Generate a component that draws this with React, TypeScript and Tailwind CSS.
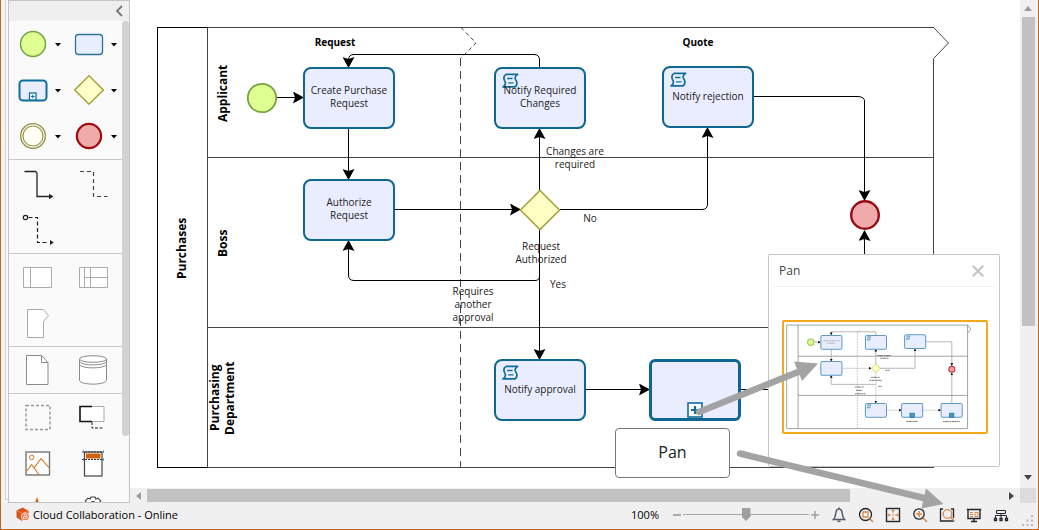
import React from "react";

type Kids = { children?: React.ReactNode };

function PaletteItem({ label, menu, children }: Kids & { label: string; menu?: boolean }) {
  return (
    <button type="button" aria-label={label} className="block h-[46px] w-14 shrink-0">
      <svg viewBox="0 0 56 46" className="block h-[46px] w-14" fill="none">
        {children}
        {menu && <path d="M46 22h6l-3 3.4z" fill="#000" />}
      </svg>
    </button>
  );
}

function PaletteSection({ children }: Kids) {
  return (
    <div className="grid grid-cols-[56px_56px] border-b border-[#c9c9c9] pb-px last:border-b-0">{children}</div>
  );
}

function Palette() {
  return (
    <aside className="flex w-[122px] shrink-0 flex-col overflow-hidden border border-[#c4c4c4] bg-[#fafafa]">
      <div className="flex h-5 shrink-0 items-center justify-end bg-[#efefef] pr-1.5">
        <button type="button" aria-label="Collapse palette">
          <svg viewBox="0 0 8 12" className="h-3 w-2" fill="none" stroke="#777" strokeWidth="1.8">
            <path d="M7 1L2 6l5 5" />
          </svg>
        </button>
      </div>
      <div className="flex min-h-0 flex-1">
        <div className="min-w-0 flex-1">
          <div className="grid grid-cols-[56px_56px] border-b border-[#c9c9c9]">
            <PaletteItem label="Start event" menu>
              <circle cx="24" cy="23" r="12.5" fill="#e0ff92" stroke="#72a541" strokeWidth="1.5" />
            </PaletteItem>
            <PaletteItem label="Task" menu>
              <rect x="10.5" y="13.5" width="27" height="20" rx="3" fill="#e9eeff" stroke="#2d7399" strokeWidth="1.3" />
            </PaletteItem>
            <PaletteItem label="Sub-process" menu>
              <rect x="10.5" y="13.5" width="27" height="20" rx="3.5" fill="#e9eeff" stroke="#0f6f9c" strokeWidth="2" />
              <rect x="20.5" y="26" width="6.5" height="7" fill="#fff" stroke="#0f6f9c" strokeWidth="1.3" />
              <path d="M22 29.5h3.6M23.8 27.7v3.6" stroke="#0f6f9c" strokeWidth="1.1" />
            </PaletteItem>
            <PaletteItem label="Gateway" menu>
              <path d="M24 8.8L38.3 23 24 37.2 9.7 23z" fill="#ffffc9" stroke="#a5a53f" strokeWidth="1.5" />
            </PaletteItem>
            <PaletteItem label="Intermediate event" menu>
              <circle cx="24" cy="23" r="12.3" fill="#fffff4" stroke="#8e8c42" strokeWidth="1.3" />
              <circle cx="24" cy="23" r="10" stroke="#9a984f" strokeWidth="1.2" />
            </PaletteItem>
            <PaletteItem label="End event" menu>
              <circle cx="24" cy="23" r="12.1" fill="#efaaaa" stroke="#9d0a12" strokeWidth="2.2" />
            </PaletteItem>
          </div>
          <PaletteSection>
            <PaletteItem label="Sequence flow">
              <path d="M15.5 11.5H26.500L28 13V36.500H41" stroke="#222" strokeWidth="1.3" />
              <path d="M40 33.8L44.500 36.500 40 39.200z" fill="#222" />
            </PaletteItem>
            <PaletteItem label="Association">
              <path d="M15 11.500H28.500V36.500H42.500" stroke="#444" strokeWidth="1.200" strokeDasharray="4 3" />
            </PaletteItem>
            <PaletteItem label="Message flow">
              <circle cx="16.500" cy="11.500" r="2.200" stroke="#222" strokeWidth="1.200" />
              <path d="M19.500 11.500H28.500V36.500H40" stroke="#222" strokeWidth="1.200" strokeDasharray="4 2.500" />
              <path d="M41 33.900L44.800 36.500 41 39.100z" fill="#222" />
            </PaletteItem>
          </PaletteSection>
          <div className="grid grid-cols-[56px_56px] border-b border-[#c9c9c9]">
            <PaletteItem label="Pool">
              <path d="M14.500 13.500h28v20h-28zM21.500 13.500v20" fill="#fff" stroke="#aaa" />
            </PaletteItem>
            <PaletteItem label="Lane">
              <path d="M14.500 13.500h28v20h-28zM19.500 13.500v20M25.500 13.500v20M19.500 23.500h23" fill="#fff" stroke="#aaa" />
            </PaletteItem>
            <PaletteItem label="Milestone">
              <path d="M18.500 9.500h16l5 6-5 6v16h-16z" fill="#fff" stroke="#aaa" />
            </PaletteItem>
          </div>
          <div className="grid grid-cols-[56px_56px] border-b border-[#c9c9c9]">
            <PaletteItem label="Data object">
              <path d="M17.500 8.500h15l6.500 7v22h-21.500z" fill="#fff" stroke="#8a8a8a" />
              <path d="M32.500 8.500v7H39" stroke="#8a8a8a" />
            </PaletteItem>
            <PaletteItem label="Data store">
              <path d="M14.500 12v21c0 5.500 27 5.500 27 0V12" fill="#fff" stroke="#8a8a8a" />
              <ellipse cx="28" cy="12" rx="13.500" ry="3.300" fill="#fff" stroke="#8a8a8a" />
              <path d="M14.500 14.500c2 4.500 25 4.500 27 0M14.500 17.500c2 4.500 25 4.500 27 0" stroke="#8a8a8a" />
            </PaletteItem>
          </div>
          <div className="grid grid-cols-[56px_56px]">
            <PaletteItem label="Group">
              <rect x="17" y="11.500" width="24" height="24" stroke="#999" strokeWidth="1.500" strokeDasharray="3 2" />
            </PaletteItem>
            <PaletteItem label="Annotation">
              <path d="M27 12.500h12v15H27" fill="#fff" stroke="#aaa" />
              <path d="M27 12.500H15v15h12" fill="#fff" stroke="#111" strokeWidth="1.600" />
              <path d="M27 28v6h11" stroke="#222" strokeDasharray="3 1.500" />
            </PaletteItem>
            <PaletteItem label="Image">
              <rect x="17" y="12" width="23.500" height="23" fill="#fff" stroke="#777" strokeWidth="1.400" />
              <circle cx="22.700" cy="17.500" r="2.300" stroke="#d9762c" />
              <path d="M17.700 31l5-6.300 7.600 10.300M25.300 27.700l6.700-9 8 9" stroke="#d9762c" strokeWidth="1.100" />
            </PaletteItem>
            <PaletteItem label="Header">
              <rect x="19.500" y="12" width="17.500" height="24" fill="#fff" stroke="#444" strokeWidth="1.200" />
              <rect x="21" y="13.500" width="14.500" height="5" fill="#d06410" />
              <path d="M17 12h22M17 19.500h22" stroke="#333" strokeDasharray="2 1" />
              <path d="M18.500 10v3M38.500 10v3M18.500 18v3M38.500 18v3" stroke="#5b8fc0" strokeWidth=".8" />
            </PaletteItem>
            <PaletteItem label="Alert">
              <path d="M28 11l5 14H23z" fill="#d06410" />
            </PaletteItem>
            <PaletteItem label="Custom artifact">
              <path d="M26 11h4l.8 2 2.200-.8 2.600 2.600-.9 2.100 2.100.9v3.600H20v-3.600l1.300-.9-.9-2.100 2.600-2.600 2.200.8z" fill="#fff" stroke="#444" strokeWidth="1.200" />
              <circle cx="28" cy="18.500" r="2.800" stroke="#444" strokeWidth="1.200" />
            </PaletteItem>
          </div>
        </div>
        <div className="w-[7px] shrink-0">
          <div className="h-[415px] rounded-full bg-[#d2d2d2]" />
        </div>
      </div>
    </aside>
  );
}

function ScriptIcon() {
  return (
    <svg viewBox="156 175 50 44" className="absolute left-[6px] top-[4px] h-[15px] w-[17px]" fill="none" stroke="#0f6f9c" strokeWidth="5" strokeLinejoin="round">
      <path d="M168 179H202C192 186 193 191 198 198C202 206 198 213 194 216H159C168 210 168 205 164 198C160 190 161 183 168 179z" />
      <path d="M171 191h16M174 204h16" strokeWidth="4" />
    </svg>
  );
}

function Task({ place, script, children }: Kids & { place: string; script?: boolean }) {
  return (
    <div className={`absolute flex h-[62px] w-[92px] items-center justify-center rounded-lg border-2 border-[#0f6690] bg-[#eaedff] pb-0.5 text-center text-[10px] leading-[13px] text-[#222] ${place}`}>
      {script && <ScriptIcon />}
      <span className="relative">{children}</span>
    </div>
  );
}

function Label({ place, children }: Kids & { place: string }) {
  return (
    <div className={`absolute w-20 text-center text-[10px] leading-[13px] text-[#222] ${place}`}>{children}</div>
  );
}

function LaneTitle({ place, children }: Kids & { place: string }) {
  return (
    <div className={`absolute flex rotate-180 items-center justify-center text-center text-[12px] leading-[15px] font-bold text-black [writing-mode:vertical-rl] ${place}`}>
      <span>{children}</span>
    </div>
  );
}

function Diagram() {
  return (
    <>
      <svg viewBox="130 0 890 488" className="absolute left-0 top-0 h-[488px] w-[890px]" fill="none">
        <defs>
          <marker id="arrow" markerUnits="userSpaceOnUse" markerWidth="12" markerHeight="12" refX="10" refY="6" orient="auto">
            <path d="M0 0L11 6 0 12 2 6z" fill="#000" />
          </marker>
        </defs>
        <g stroke="#444" shapeRendering="crispEdges">
          <path d="M207.500 27.500H933.500M207.500 157.500H933.500M207.500 327.500H933.500M207.500 467.500H933.500V58.500M207.500 27.500V467.500" />
          <path d="M460.500 58V467" strokeDasharray="8 5" />
        </g>
        <path d="M933.500 27.500L948.500 43 933.500 58.500" stroke="#444" />
        <path d="M461 27.500L476 43 461 58" stroke="#444" strokeDasharray="4 3" />
        <path d="M207.500 27.500H157.500V467.500H207.500" stroke="#000" shapeRendering="crispEdges" />
        <g stroke="#000">
          <path d="M277 97.500H303" markerEnd="url(#arrow)" />
          <path d="M348.500 129V179" markerEnd="url(#arrow)" />
          <path d="M539.500 67V60Q539.500 54.500 534 54.500H354Q348.500 54.500 348.500 60V67" markerEnd="url(#arrow)" />
          <path d="M395 209.500H520" markerEnd="url(#arrow)" />
          <path d="M539.500 190V129" markerEnd="url(#arrow)" />
          <path d="M560 209.500H702Q707.500 209.500 707.500 204V128" markerEnd="url(#arrow)" />
          <path d="M754 96.500H858Q864.500 97 864.500 101V200" markerEnd="url(#arrow)" />
          <path d="M864.500 389V231" markerEnd="url(#arrow)" />
          <path d="M539.500 230V359" markerEnd="url(#arrow)" />
          <path d="M539.500 276Q539.500 280.500 535 280.500H354Q348.500 280.500 348.500 275V241" markerEnd="url(#arrow)" />
          <path d="M586 389.500H649" markerEnd="url(#arrow)" />
          <path d="M741 389.500H790" />
        </g>
        <circle cx="262" cy="98" r="14.200" fill="#e0ff92" stroke="#72a541" strokeWidth="1.800" />
        <path d="M540 190.500L559.500 210 540 229.500 520.500 210z" fill="#ffffc4" stroke="#a5a53f" strokeWidth="1.600" />
        <circle cx="865" cy="215" r="13.800" fill="#f1aaaa" stroke="#970c14" strokeWidth="2.400" />
      </svg>

      <h2 className="absolute left-[165px] top-[34px] w-20 text-center text-[10px] leading-4 font-bold text-black">Request</h2>
      <h2 className="absolute left-[528px] top-[34px] w-20 text-center text-[10px] leading-4 font-bold text-black">Quote</h2>
      <LaneTitle place="left-[41px] top-[28px] h-[440px] w-5">Purchases</LaneTitle>
      <LaneTitle place="left-[82px] top-[28px] h-[130px] w-5">Applicant</LaneTitle>
      <LaneTitle place="left-[82px] top-[158px] h-[170px] w-5">Boss</LaneTitle>
      <LaneTitle place="left-[77px] top-[328px] h-[140px] w-[30px]">Purchasing<br />Department</LaneTitle>

      <Task place="left-[173px] top-[67px]">Create Purchase<br />Request</Task>
      <Task place="left-[364px] top-[67px]" script>Notify Required<br />Changes</Task>
      <Task place="left-[532px] top-[66px]" script>Notify rejection</Task>
      <Task place="left-[173px] top-[179px]">Authorize<br />Request</Task>
      <Task place="left-[364px] top-[359px]" script>Notify approval</Task>
      <div className="absolute left-[519px] top-[359px] flex h-[62px] w-[92px] items-end justify-center rounded-md border-3 border-[#0f6690] bg-[#eaedff]">
        <svg viewBox="0 0 16 16" className="h-4 w-4" fill="#fff" stroke="#0f6f9c">
          <rect x="1" y="1" width="14" height="14" strokeWidth="1.600" />
          <path d="M4 8h8M8 4v8" strokeWidth="2.200" />
        </svg>
      </div>

      <Label place="left-[405px] top-[145px]">Changes are<br />required</Label>
      <Label place="left-[420px] top-[212px]">No</Label>
      <Label place="left-[371px] top-[240px]">Request<br />Authorized</Label>
      <Label place="left-[388px] top-[278px]">Yes</Label>
      <Label place="left-[303px] top-[285px]">Requires<br />another<br />approval</Label>
    </>
  );
}

const miniTasks = [
  [123, 61, "plain"],
  [256, 61, "script"],
  [373, 59, "script"],
  [123, 139, "plain"],
  [256, 264, "script"],
  [364, 264, "sub"],
  [482, 264, "sub"],
] as const;

function Minimap() {
  return (
    <svg viewBox="14 22 603 328" className="block h-full w-full" fill="none">
      <defs>
        <marker id="mini" markerUnits="userSpaceOnUse" markerWidth="8" markerHeight="8" refX="7" refY="4" orient="auto">
          <path d="M0 0L8 4 0 8z" fill="#000" />
        </marker>
      </defs>
      <g stroke="#777" strokeWidth="2">
        <path d="M22 31H562V340H22zM56 31V340M56 124H562M56 241H562" />
        <path d="M562 31l10 12-10 12" />
        <path d="M233 54V340M233 54l9-11" strokeDasharray="5 3" stroke="#aaa" />
      </g>
      <g stroke="#888" strokeWidth="1.800">
        <path d="M105 82H123" markerEnd="url(#mini)" />
        <path d="M155 102V139" markerEnd="url(#mini)" />
        <path d="M288 61V51H155V60" markerEnd="url(#mini)" />
        <path d="M288 148V103" markerEnd="url(#mini)" />
        <path d="M300 160H405V102" markerEnd="url(#mini)" />
        <path d="M437 81H515V152" markerEnd="url(#mini)" />
        <path d="M515 264V174" markerEnd="url(#mini)" />
        <path d="M288 208H155V181" markerEnd="url(#mini)" />
        <g stroke="#bbb">
          <path d="M187 160H274" markerEnd="url(#mini)" />
          <path d="M288 174V264" markerEnd="url(#mini)" />
          <path d="M320 285H364" markerEnd="url(#mini)" />
          <path d="M428 285H482" markerEnd="url(#mini)" />
        </g>
      </g>
      {miniTasks.map(([x, y, kind]) => (
        <g key={`${x}-${y}`}>
          <rect x={x + 1} y={y + 1} width="63" height="41" rx="5" fill="#e8eeff" stroke="#5d9ac4" strokeWidth="3" />
          {kind === "script" && <path d={`M${x + 8} ${y + 5}h9l-3 5 1 4h-9l3-5z`} stroke="#2d7ca8" strokeWidth="2" />}
          {kind === "sub" && <rect x={x + 26} y={y + 30} width="13" height="12" fill="#4b98b8" stroke="#0f6f9c" strokeWidth="2" />}
        </g>
      ))}
      <circle cx="94" cy="82" r="9.500" fill="#e0ff92" stroke="#94c455" strokeWidth="3" />
      <path d="M288 147l13 13-13 13-13-13z" fill="#ffffbe" stroke="#bfbf60" strokeWidth="2" />
      <circle cx="515" cy="163" r="9" fill="#f29a9a" stroke="#a8323a" strokeWidth="3" />
      <g stroke="#555" strokeWidth="2.400" strokeDasharray="5 1.500 8 1 3 1.500">
        <path d="M292 122h42M301 130h26M274 187h26M269 196h37M317 166h12M295 214h11M226 216h27M229 226h20M226 236h31M379 319h34M489 319h50" />
        <path d="M131 78h49M142 85h26" stroke="#888" strokeWidth="1.800" />
      </g>
    </svg>
  );
}

function PanWindow() {
  return (
    <section aria-label="Pan" className="absolute right-5 top-[254px] flex h-[213px] w-[232px] flex-col rounded-xs border border-[#c6c6c6] bg-white">
      <header className="mx-1 flex h-8 shrink-0 items-center justify-between border-b border-[#efefef] pl-1.5 pr-[11px]">
        <h3 className="text-[12px] leading-4 text-[#444]">Pan</h3>
        <button type="button" aria-label="Close">
          <svg viewBox="0 0 12 12" className="h-3 w-3" stroke="#c4c4c4" strokeWidth="2">
            <path d="M.8.8l10.400 10.400M11.200.8L.8 11.200" />
          </svg>
        </button>
      </header>
      <div className="pl-[13px] pr-[11px] pt-[33px]">
        <div className="h-[114px] rounded-xs border-2 border-[#f5a81c]">
          <Minimap />
        </div>
      </div>
    </section>
  );
}

function StatusIcon({ label, children }: Kids & { label: string }) {
  return (
    <button type="button" aria-label={label} className="flex h-6 w-[27px] shrink-0 items-center justify-center">
      <svg viewBox="0 0 16 16" className="h-4 w-4" fill="none" stroke="#26242e" strokeWidth="1.300">
        {children}
      </svg>
    </button>
  );
}

function StatusBar() {
  return (
    <footer className="flex h-[26px] shrink-0 items-center bg-[#f0f0f0] pb-[3px] pl-[15px] text-[11px] leading-4 text-black">
      <svg viewBox="0 0 14 15" className="mr-[3px] h-[15px] w-3.5">
        <path d="M6.500.5l6 3.200v4L9 9 6 14 .5 10.500v-7z" fill="#d9541e" />
        <path d="M.5 3.500l6 3 6-3" stroke="#f08a50" strokeWidth=".8" fill="none" />
        <circle cx="9.300" cy="9.700" r="4.300" fill="#fff" />
        <circle cx="9.300" cy="9.700" r="3.500" fill="#e86b3a" />
        <path d="M7.500 9.500h3.600v2.200H7.500zM8.200 9.300V8.200a1.100 1.100 0 0 1 2.200 0v1.100" fill="none" stroke="#fff" strokeWidth=".8" />
      </svg>
      <span>Cloud Collaboration - Online</span>
      <div className="ml-auto flex items-center">
        <label htmlFor="zoom" className="mr-3">100%</label>
        <button type="button" aria-label="Zoom out" className="flex h-4 w-3 items-center justify-center">
          <span className="block h-[2px] w-2 bg-[#aaa]" />
        </button>
        <input
          id="zoom"
          type="range"
          min="0"
          max="200"
          defaultValue="100"
          className="h-4 w-[126px] appearance-none bg-[linear-gradient(#a8a8a8,#a8a8a8)] bg-[length:100%_1px] bg-center bg-no-repeat [&::-webkit-slider-thumb]:h-[13px] [&::-webkit-slider-thumb]:w-[9px] [&::-webkit-slider-thumb]:appearance-none [&::-webkit-slider-thumb]:bg-[#9f9f9f] [&::-webkit-slider-thumb]:[clip-path:polygon(0_0,100%_0,100%_65%,50%_100%,0_65%)]"
        />
        <button type="button" aria-label="Zoom in" className="mr-1 flex h-4 w-3 items-center justify-center">
          <svg viewBox="0 0 8 8" className="h-2 w-2" stroke="#a0a0a0" strokeWidth="1.500">
            <path d="M0 4h8M4 0v8" />
          </svg>
        </button>
        <StatusIcon label="Notifications">
          <path d="M2.500 12.500c2-2 2-3.500 2.200-6C5 3.500 6.500 2 8 2s3 1.500 3.300 4.500c.2 2.500.2 4 2.200 6z" stroke="#55586a" strokeWidth="1.500" />
          <path d="M6.500 14.300h3M8 .6V2" stroke="#55586a" strokeWidth="1.500" />
        </StatusIcon>
        <StatusIcon label="Actual size">
          <circle cx="7.500" cy="7.500" r="6" />
          <path d="M5 5h5v5H5z" stroke="#d98a4c" />
          <path d="M12 12l3 3" stroke="#d98a4c" strokeWidth="1.700" />
        </StatusIcon>
        <StatusIcon label="Fit to window">
          <rect x="1.500" y="1.500" width="13" height="13" strokeWidth="1.400" />
          <path d="M8 3v3M8 10v3M3 8h3M10 8h3M7 8h2M6.800 4L8 2.800 9.200 4M6.800 12L8 13.200 9.200 12M4 6.800L2.800 8 4 9.200M12 6.800L13.200 8 12 9.200" stroke="#d98a4c" strokeWidth="1.100" />
        </StatusIcon>
        <StatusIcon label="Zoom area">
          <circle cx="7" cy="7" r="5.200" />
          <path d="M4 7h6M7 4v6M11 11l4 4" stroke="#d98a4c" strokeWidth="1.600" />
        </StatusIcon>
        <StatusIcon label="Pan">
          <path d="M4 2H1.500v12h13V13M12 2h2.500v9" />
          <circle cx="8.500" cy="7" r="4.300" stroke="#d98a4c" />
          <path d="M11.500 10.200l3.500 3.500" stroke="#d98a4c" strokeWidth="1.600" />
        </StatusIcon>
        <StatusIcon label="Presentation mode">
          <path d="M.8 2.500h14.400M2 2.500v9h12v-9M8 11.500v2.500M5 14.500h6" strokeWidth="1.400" />
          <path d="M4 5.500h3M4 7.500h3M4 9.500h3M9 5.500h3v4H9z" stroke="#d98a4c" strokeWidth="1" />
        </StatusIcon>
        <StatusIcon label="Model tree">
          <path d="M3.500 3.500h9v3h-9zM8 6.500v2M2.500 11V8.500h11V11M8 8.500V11" strokeWidth="1" />
          <path d="M1.500 11.500h2v2h-2zM7 11.500h2v2H7zM12.500 11.500h2v2h-2z" />
        </StatusIcon>
        <svg viewBox="0 0 12 12" className="ml-2 mr-1 mt-3 h-3 w-3" fill="#b9b9b9">
          <path d="M9 0h2v2H9zM9 4.500h2v2H9zM4.500 4.500h2v2h-2zM9 9h2v2H9zM4.500 9h2v2h-2zM0 9h2v2H0z" />
        </svg>
      </div>
    </footer>
  );
}

function Callout() {
  return (
    <>
      <div className="absolute left-[614px] top-[428px] flex h-[50px] w-[115px] items-center justify-center rounded border border-[#777] bg-white pb-0.5 text-[16px] text-[#222]">
        Pan
      </div>
      <svg viewBox="1 0 1039 530" className="pointer-events-none absolute left-0 top-0 h-[530px] w-[1039px]" fill="#a3a3a3" stroke="#a3a3a3">
        <path d="M699 412L803 370M740 453.500L926 498.500" strokeWidth="6.500" strokeLinecap="round" />
        <path d="M818 363.500L794 361.500 802 381zM943.500 504L926 488.500 921.500 508.500z" stroke="none" />
      </svg>
    </>
  );
}

export default function App() {
  return (
    <div className="relative flex h-screen w-full flex-col overflow-hidden border-x border-b border-[#c0651c] bg-white font-['Open_Sans','Noto_Sans',sans-serif]">
      <div className="flex min-h-0 flex-1">
        <div className="w-[7px] shrink-0 bg-[#f5f5f5] pl-1">
          <div className="h-[500px] border-b border-l border-[#d0d0d0] bg-[#fafafa]" />
        </div>
        <Palette />
        <div className="flex min-w-0 flex-1 flex-col">
          <main className="relative min-h-0 flex-1 overflow-hidden bg-white">
            <Diagram />
            <PanWindow />
          </main>
          <div className="flex h-[15px] shrink-0 items-center bg-[#f0f0f0]">
            <svg viewBox="0 0 5 8" className="mx-1.5 h-2 w-[5px] shrink-0" fill="#999">
              <path d="M5 0v8L0 4z" />
            </svg>
            <div className="h-[13px] w-[79%] bg-[#c1c1c1]" />
            <svg viewBox="0 0 5 8" className="ml-auto mr-1.5 h-2 w-[5px] shrink-0" fill="#444">
              <path d="M0 0v8l5-4z" />
            </svg>
          </div>
        </div>
        <div className="flex w-[18px] shrink-0 flex-col items-center bg-[#f0f0f0] pr-0.5">
          <svg viewBox="0 0 8 5" className="mb-1.5 mt-1.5 h-[5px] w-2 shrink-0" fill="#999">
            <path d="M0 5h8L4 0z" />
          </svg>
          <div className="h-[309px] w-[13px] shrink-0 bg-[#c1c1c1]" />
          <svg viewBox="0 0 8 5" className="mb-2 mt-auto h-[5px] w-2 shrink-0" fill="#444">
            <path d="M0 0h8L4 5z" />
          </svg>
          <div className="h-[15px] w-full shrink-0 bg-[#dcdcdc]" />
        </div>
      </div>
      <StatusBar />
      <Callout />
    </div>
  );
}
